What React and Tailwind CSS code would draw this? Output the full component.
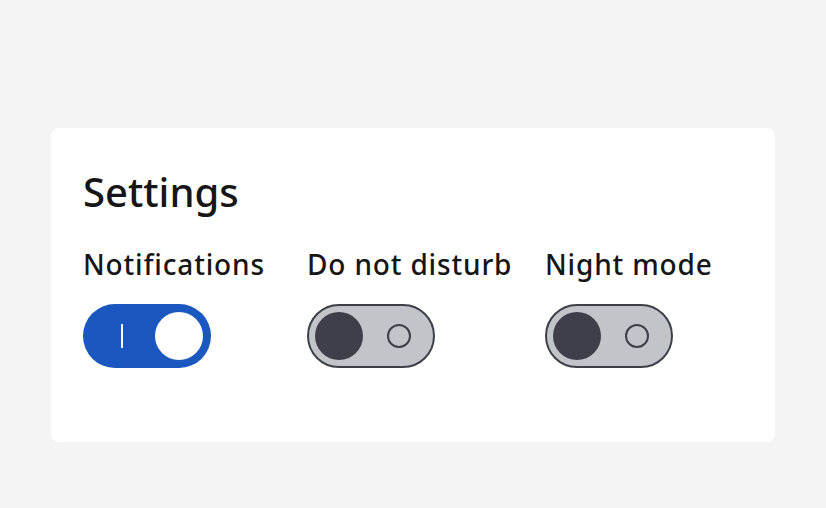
import React, { useState } from 'react';

const Toggle = ({ on, onChange }) =>
  on ? (
    <button
      onClick={onChange}
      className="flex items-center justify-between w-[128px] h-[64px] rounded-full bg-[#1a57bf] pl-[38px] pr-[8px]"
    >
      <span className="w-[2px] h-[24px] bg-white" />
      <span className="w-[48px] h-[48px] rounded-full bg-white" />
    </button>
  ) : (
    <button
      onClick={onChange}
      className="flex items-center gap-[24px] w-[128px] h-[64px] rounded-full bg-[#c1c4c9] border-2 border-[#3d4048] pl-[6px]"
    >
      <span className="w-[48px] h-[48px] rounded-full bg-[#3d4048]" />
      <span className="w-[24px] h-[24px] rounded-full border-2 border-[#3d4048]" />
    </button>
  );

const App = () => {
  const [vals, setVals] = useState({ notifications: true, dnd: false, night: false });
  const items = [
    { key: 'notifications', label: 'Notifications' },
    { key: 'dnd', label: 'Do not disturb' },
    { key: 'night', label: 'Night mode' },
  ];

  return (
    <div className="w-[826px] h-[508px] bg-[#f4f4f4] pt-[128px] pl-[51px] font-['Noto_Sans',sans-serif] text-[#161616]">
      <div className="w-[724px] h-[314px] bg-white rounded-lg px-[32px] pt-[36px]">
        <h1 className="text-[40px] leading-[56px] font-medium">Settings</h1>
        <div className="grid grid-cols-[224px_238px_auto] mt-[28px]">
          {items.map((it) => (
            <div key={it.key} className="flex flex-col gap-[24px]">
              <span className="text-[28px] leading-[32px] font-medium tracking-[0.03em]">{it.label}</span>
              <Toggle
                on={vals[it.key]}
                onChange={() => setVals((v) => ({ ...v, [it.key]: !v[it.key] }))}
              />
            </div>
          ))}
        </div>
      </div>
    </div>
  );
};

export default App;
